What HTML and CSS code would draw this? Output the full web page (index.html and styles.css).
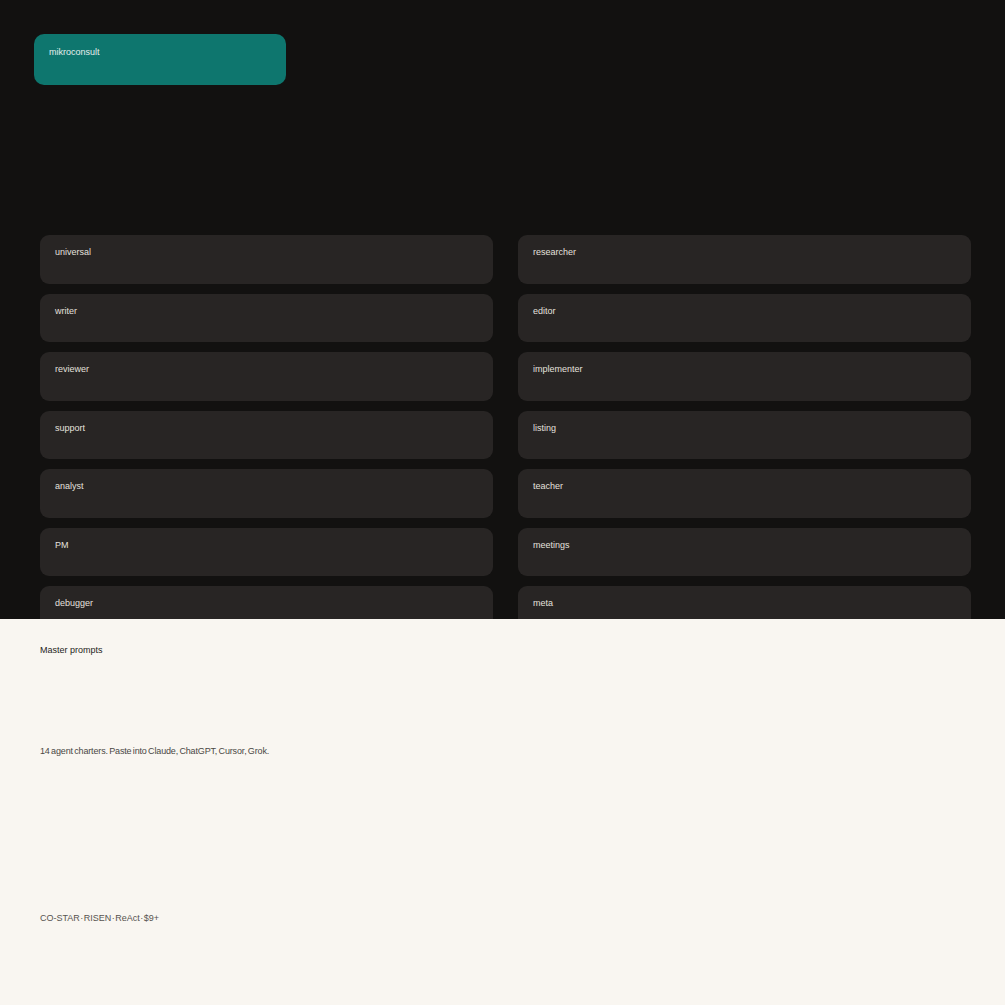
FILE: index.html
```html
<!DOCTYPE html>
<html lang="en">
<head>
    <meta charset="UTF-8">
    <meta name="viewport" content="width=device-width, initial-scale=1.0">
    <title>mikroconsult — Master prompts</title>
    <link rel="stylesheet" href="styles.css">
</head>
<body>
    <section class="stage">
        <div class="brand">mikroconsult</div>
        <div class="agents">
            <div class="agent">universal</div>
            <div class="agent">researcher</div>
            <div class="agent">writer</div>
            <div class="agent">editor</div>
            <div class="agent">reviewer</div>
            <div class="agent">implementer</div>
            <div class="agent">support</div>
            <div class="agent">listing</div>
            <div class="agent">analyst</div>
            <div class="agent">teacher</div>
            <div class="agent">PM</div>
            <div class="agent">meetings</div>
            <div class="agent">debugger</div>
            <div class="agent">meta</div>
        </div>
    </section>
    <section class="info">
        <h1 class="title">Master prompts</h1>
        <p class="lead">14 agent charters. Paste into Claude, ChatGPT, Cursor, Grok.</p>
        <p class="meta">CO-STAR · RISEN · ReAct · $9+</p>
    </section>
</body>
</html>
```

FILE: styles.css
```css
body {
    margin: 0;
    font-family: "Liberation Sans", Arial, sans-serif;
    font-size: 9px;
    background-color: #f9f6f1;
}
.stage {
    height: 619px;
    overflow: hidden;
    background-color: #121110;
    padding: 34px 0 0 34px;
    box-sizing: border-box;
}
.brand {
    width: 252px;
    height: 51px;
    box-sizing: border-box;
    padding: 13px 15px;
    background-color: #0e766e;
    color: #e6efed;
    border-radius: 10px;
}
.agents {
    display: grid;
    grid-template-columns: 453px 453px;
    column-gap: 25px;
    row-gap: 10px;
    margin: 150px 0 0 6px;
}
.agent {
    height: 48.5px;
    box-sizing: border-box;
    padding: 12px 15px;
    background-color: #282524;
    color: #e4e1de;
    border-radius: 9px;
}
.info {
    padding: 26px 40px 0;
    height: 386px;
    box-sizing: border-box;
}
.title {
    margin: 0;
    font-size: 9px;
    font-weight: normal;
    color: #1f1d1b;
}
.lead {
    margin: 91px 0 0;
    color: #4a4744;
    letter-spacing: -0.15px;
    word-spacing: -1px;
}
.meta {
    margin: 157px 0 0;
    color: #57534f;
    word-spacing: -2px;
}
```
